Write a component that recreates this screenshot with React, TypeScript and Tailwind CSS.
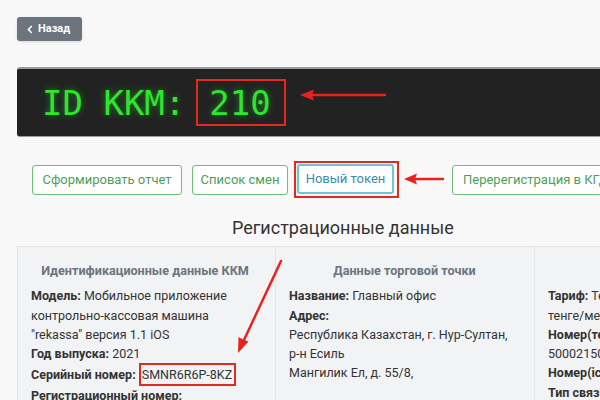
import React from "react";

const body = { fontFamily: "Roboto, 'Noto Sans', sans-serif" };
const mono = { fontFamily: "'DejaVu Sans Mono', 'Liberation Mono', monospace", textShadow: "0 0 6px rgba(40,255,40,0.45)" };

function Row({ label, value }: { label: string; value?: React.ReactNode }) {
  return (
    <div>
      <span className="font-bold text-[#333]">{label}</span>
      {value !== undefined ? <> {value}</> : null}
    </div>
  );
}

export default function App() {
  return (
    <div
      className="relative w-[600px] h-[400px] overflow-hidden bg-[#f8f8f8] pl-[17px] pt-[17px] text-[#333]"
      style={body}
    >
      {/* back button */}
      <button className="flex items-center gap-[5px] h-[24px] w-[65px] pl-[10px] rounded-[3px] bg-[#6c757d] text-white text-[11px] font-bold shadow-sm">
        <svg width="6" height="9" viewBox="0 0 6 9" fill="none">
          <path d="M4.8 1 1.5 4.5 4.8 8" stroke="white" strokeWidth="1.6" />
        </svg>
        <span>Назад</span>
      </button>

      {/* device id banner */}
      <div className="mt-[26px] w-[640px] h-[70px] bg-[#222] border-t-2 border-b border-[#9a9a9a] rounded-l-[3px] flex items-center pl-[25px]">
        <span className="text-[34px] leading-none text-[#2ee62e] whitespace-pre" style={mono}>
          ID KKM:
        </span>
        <span
          className="ml-[11px] h-[47px] w-[90px] border-2 border-[#e02b1f] flex items-center pl-[11px] text-[34px] leading-none text-[#2ee62e]"
          style={mono}
        >
          210
        </span>
      </div>

      {/* actions */}
      <div className="mt-[24px] pl-[15px] flex items-center whitespace-nowrap w-[700px]">
        <button className="shrink-0 h-[30px] w-[150px] border border-[#6cc07a] rounded-[3px] bg-white text-[13px] text-[#4a9f5a]">
          Сформировать отчет
        </button>
        <button className="shrink-0 ml-[10px] h-[30px] w-[96px] border border-[#6cc07a] rounded-[3px] bg-white text-[13px] text-[#4a9f5a]">
          Список смен
        </button>
        <div className="shrink-0 ml-[6px] border-2 border-[#e02b1f] pt-[1px] pb-[2px] pl-[1px] pr-[3px]">
          <button className="h-[30px] w-[97px] border-2 border-[#6ec6da] rounded-[3px] bg-white text-[13px] text-[#3a8cad]">
            Новый токен
          </button>
        </div>
        <button className="shrink-0 ml-[53px] h-[30px] px-[10px] border border-[#6cc07a] rounded-[3px] bg-white text-[13px] text-[#4a9f5a]">
          Перерегистрация в КГД
        </button>
      </div>

      <h2 className="mt-[16px] ml-[215px] text-[18px] leading-[28px] text-[#333] whitespace-nowrap">
        Регистрационные данные
      </h2>

      {/* data cards */}
      <div className="mt-[4px] flex w-[780px] text-[12.5px] leading-[19.3px]">
        <div className="w-[259px] shrink-0 bg-[#f2f3f5] border border-[#e2e4e7] pl-[13px] pr-[16px] pt-[14px] pb-[8px]">
          <div className="text-center font-bold text-[12.6px] text-[#6c757d] whitespace-nowrap mb-[6px]">Идентификационные данные ККМ</div>
          <Row label="Модель:" value="Мобильное приложение контрольно-кассовая машина &quot;rekassa&quot; версия 1.1 iOS" />
          <Row label="Год выпуска:" value="2021" />
          <div className="whitespace-nowrap">
            <span className="font-bold">Серийный номер:</span>{" "}
            <span className="inline-block border-2 border-[#e02b1f] leading-[19px] pl-[1px] pr-[2px]">SMNR6R6P-8KZ</span>
          </div>
          <Row label="Регистрационный номер:" />
          <div>010203040506</div>
        </div>
        <div className="w-[259px] shrink-0 bg-[#f2f3f5] border-y border-r border-[#e2e4e7] pl-[13px] pr-[14px] pt-[14px] pb-[8px]">
          <div className="text-center font-bold text-[12.6px] text-[#6c757d] mb-[6px]">Данные торговой точки</div>
          <Row label="Название:" value="Главный офис" />
          <Row label="Адрес:" />
          <div>
            Республика Казахстан, г. Нур-Султан, <span className="whitespace-nowrap">р-н Есиль</span>
          </div>
          <div>Мангилик Ел, д. 55/8,</div>
        </div>
        <div className="w-[259px] shrink-0 bg-[#f2f3f5] border-y border-r border-[#e2e4e7] pl-[13px] pr-[14px] pt-[14px] pb-[8px]">
          <div className="text-center font-bold text-[12.6px] text-[#6c757d] mb-[6px] opacity-0">Тариф</div>
          <div>
            <span className="font-bold">Тариф:</span> Тестовый (бесплатно), 0{" "}
            <span className="whitespace-nowrap">тенге/месяц</span>
          </div>
          <Row label="Номер(телефона):" />
          <div>500021500</div>
          <Row label="Номер(iccid):" />
          <Row label="Тип связи:" />
        </div>
      </div>

      {/* annotation arrows */}
      <svg className="absolute left-0 top-0 pointer-events-none" width="600" height="400" viewBox="0 0 600 400">
        <g stroke="#e8211c" strokeWidth="2.5" fill="none" strokeLinecap="round">
          <line x1="385" y1="95" x2="310" y2="95" />
          <line x1="443" y1="179" x2="414" y2="179" />
          <line x1="281" y1="261" x2="244" y2="340" />
        </g>
        <g fill="#e8211c">
          <polygon points="300,95 314,89.5 312,95 314,100.5" />
          <polygon points="404,179 417,173.5 415,179 417,184.5" />
          <polygon points="238,353 238.5,337 243,339.5 248.5,341.5" />
        </g>
      </svg>
    </div>
  );
}
